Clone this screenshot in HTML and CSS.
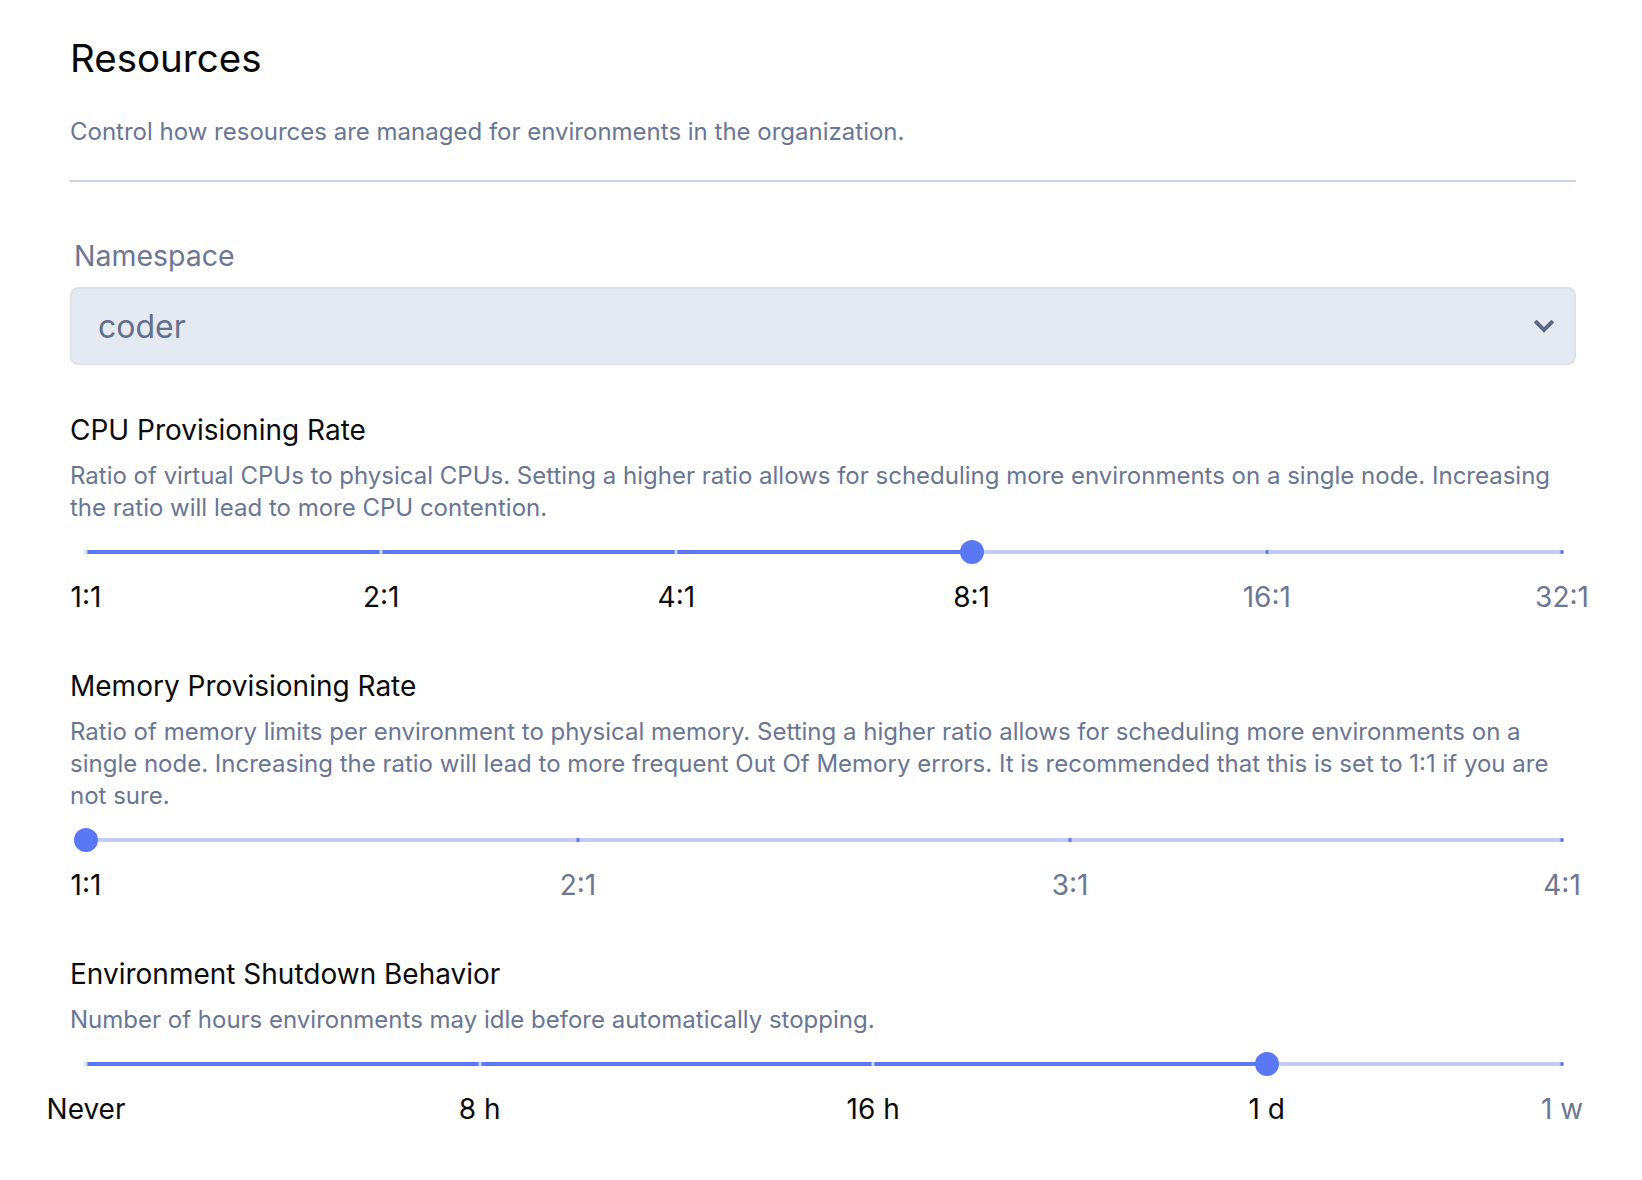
FILE: index.html
```html
<!DOCTYPE html>
<html lang="en">
<head>
<meta charset="utf-8">
<title>Resources</title>
<link rel="stylesheet" href="styles.css">
</head>
<body>
<main class="page">
  <h1 class="title">Resources</h1>
  <p class="subtitle">Control how resources are managed for environments in the organization.</p>
  <hr class="divider">

  <div class="field">
    <label class="field-label">Namespace</label>
    <div class="select">
      <span class="select-value">coder</span>
      <svg class="chevron" width="20" height="13" viewBox="0 0 20 13" aria-hidden="true">
        <path d="M2.5 2.5 L10 10 L17.5 2.5" fill="none" stroke="#5d6984" stroke-width="4" stroke-linecap="square" stroke-linejoin="miter"/>
      </svg>
    </div>
  </div>

  <section class="setting">
    <h2 class="setting-title">CPU Provisioning Rate</h2>
    <p class="desc">Ratio of virtual CPUs to physical CPUs. Setting a higher ratio allows for scheduling more environments on a single node. Increasing the ratio will lead to more CPU contention.</p>
    <div class="slider">
      <div class="rail">
        <div class="track" style="width:60%"></div>
        <span class="tick on" style="left:0%"></span>
        <span class="tick on" style="left:20%"></span>
        <span class="tick on" style="left:40%"></span>
        <span class="tick off" style="left:80%"></span>
        <span class="tick off" style="left:100%"></span>
        <span class="thumb" style="left:60%"></span>
      </div>
      <div class="marks">
        <span class="mark active" style="left:0%">1:1</span>
        <span class="mark active" style="left:20%">2:1</span>
        <span class="mark active" style="left:40%">4:1</span>
        <span class="mark active" style="left:60%">8:1</span>
        <span class="mark" style="left:80%">16:1</span>
        <span class="mark" style="left:100%">32:1</span>
      </div>
    </div>
  </section>

  <section class="setting">
    <h2 class="setting-title">Memory Provisioning Rate</h2>
    <p class="desc">Ratio of memory limits per environment to physical memory. Setting a higher ratio allows for scheduling more environments on a single node. Increasing the ratio will lead to more frequent Out Of Memory errors. It is recommended that this is set to 1:1 if you are not sure.</p>
    <div class="slider">
      <div class="rail">
        <div class="track" style="width:0%"></div>
        <span class="tick off" style="left:33.333%"></span>
        <span class="tick off" style="left:66.667%"></span>
        <span class="tick off" style="left:100%"></span>
        <span class="thumb" style="left:0%"></span>
      </div>
      <div class="marks">
        <span class="mark active" style="left:0%">1:1</span>
        <span class="mark" style="left:33.333%">2:1</span>
        <span class="mark" style="left:66.667%">3:1</span>
        <span class="mark" style="left:100%">4:1</span>
      </div>
    </div>
  </section>

  <section class="setting">
    <h2 class="setting-title">Environment Shutdown Behavior</h2>
    <p class="desc">Number of hours environments may idle before automatically stopping.</p>
    <div class="slider">
      <div class="rail">
        <div class="track" style="width:80%"></div>
        <span class="tick on" style="left:0%"></span>
        <span class="tick on" style="left:26.667%"></span>
        <span class="tick on" style="left:53.333%"></span>
        <span class="tick off" style="left:100%"></span>
        <span class="thumb" style="left:80%"></span>
      </div>
      <div class="marks">
        <span class="mark active" style="left:0%">Never</span>
        <span class="mark active" style="left:26.667%">8 h</span>
        <span class="mark active" style="left:53.333%">16 h</span>
        <span class="mark active" style="left:80%">1 d</span>
        <span class="mark" style="left:100%">1 w</span>
      </div>
    </div>
  </section>
</main>
</body>
</html>
```

FILE: styles.css
```css
* { box-sizing: border-box; }

html, body {
  margin: 0;
  padding: 0;
  background: #ffffff;
}

body {
  font-family: Inter, "Noto Sans", "Liberation Sans", sans-serif;
  color: #0b0b0b;
}

.page {
  width: 1506px;
  margin-left: 70px;
  padding-top: 36px;
}

.title {
  margin: 0;
  font-size: 38.5px;
  font-weight: 400;
  line-height: 44px;
  color: #080808;
}

.subtitle {
  margin: 36px 0 0;
  font-size: 24px;
  line-height: 32px;
  color: #687694;
}

.divider {
  margin: 32px 0 0;
  border: 0;
  height: 2px;
  background: #cbd1dc;
}

.field {
  margin-top: 58px;
}

.field-label {
  display: block;
  padding-left: 4px;
  font-size: 28.5px;
  line-height: 32px;
  color: #6b7793;
}

.select {
  margin-top: 15px;
  height: 78px;
  display: flex;
  align-items: center;
  justify-content: space-between;
  padding: 0 20px 0 26px;
  background: #e5e9f1;
  border: 2px solid #dde2eb;
  border-radius: 8px;
}

.select-value {
  font-size: 32px;
  color: #63708c;
}

.chevron {
  display: block;
}

.setting {
  margin-top: 47px;
}

.setting + .setting {
  margin-top: 55px;
}

.setting-title {
  margin: 0;
  font-size: 28px;
  font-weight: 400;
  line-height: 36px;
  color: #0b0b0b;
}

.desc {
  margin: 12px 0 0;
  font-size: 24px;
  line-height: 32px;
  color: #687694;
}

.slider {
  margin: 16px 14px 0 16px;
}

.rail {
  position: relative;
  height: 24px;
}

.rail::before {
  content: "";
  position: absolute;
  left: 0;
  right: 0;
  top: 10px;
  height: 4px;
  background: #c5ccf8;
}

.track {
  position: absolute;
  left: 0;
  top: 10px;
  height: 4px;
  background: #5a78f3;
}

.tick {
  position: absolute;
  top: 10px;
  width: 3px;
  height: 4px;
  border-radius: 1px;
  transform: translateX(-50%);
}

.tick.on { background: #d3d9fa; }
.tick.off { background: #5a78f3; }

.thumb {
  position: absolute;
  top: 0;
  width: 24px;
  height: 24px;
  border-radius: 50%;
  background: #5a78f3;
  transform: translateX(-50%);
}

.marks {
  position: relative;
  height: 32px;
  margin-top: 17px;
}

.mark {
  position: absolute;
  top: 0;
  transform: translateX(-50%);
  white-space: nowrap;
  font-size: 28px;
  line-height: 32px;
  color: #6b7793;
}

.mark.active {
  color: #0b0b0b;
}
```
